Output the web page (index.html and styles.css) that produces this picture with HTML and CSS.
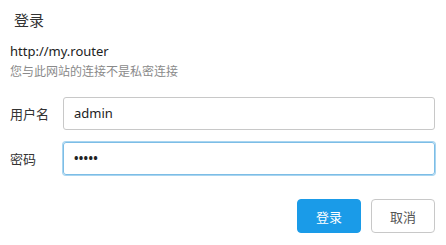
FILE: index.html
```html
<!DOCTYPE html>
<html lang="zh-CN">
<head>
<meta charset="utf-8">
<link rel="stylesheet" href="styles.css">
</head>
<body>
<div class="dialog">
  <div class="title">登录</div>
  <div class="origin">http://my.router</div>
  <div class="warning">您与此网站的连接不是私密连接</div>
  <div class="form">
    <div class="row">
      <label class="label">用户名</label>
      <div class="input">admin</div>
    </div>
    <div class="row">
      <label class="label">密码</label>
      <div class="input focus"><span class="dots">•••••</span></div>
    </div>
  </div>
  <div class="buttons">
    <button class="btn primary">登录</button>
    <button class="btn">取消</button>
  </div>
</div>
</body>
</html>
```
FILE: styles.css
```css
html, body {
  margin: 0;
  padding: 0;
  background: #ffffff;
}
body {
  font-family: "Noto Sans", "Noto Sans CJK SC", sans-serif;
  color: #333;
}
.dialog {
  width: 446px;
  height: 245px;
  box-sizing: border-box;
  padding: 9px 11px 0 10px;
}
.title {
  font-size: 15px;
  line-height: 22px;
  padding-left: 4px;
  color: #333;
}
.origin {
  margin-top: 11px;
  font-size: 13px;
  line-height: 18px;
  color: #222;
}
.warning {
  margin-top: 4px;
  font-size: 12px;
  line-height: 16px;
  color: #8a8a8a;
}
.form {
  margin-top: 17px;
  display: flex;
  flex-direction: column;
  gap: 12px;
}
.row {
  display: flex;
  align-items: center;
}
.label {
  width: 53px;
  font-size: 13px;
  color: #333;
}
.input {
  flex: 1;
  height: 33px;
  box-sizing: border-box;
  border: 1px solid #c8c8c8;
  border-radius: 3px;
  padding: 0 10px;
  font-size: 13px;
  line-height: 31px;
  color: #222;
}
.input.focus {
  border-color: #7cbde6;
  box-shadow: 0 0 0 1px #a9d5f0;
}
.dots {
  font-size: 12px;
  font-weight: bold;
  letter-spacing: 0.3px;
  color: #222;
}
.buttons {
  margin-top: 24px;
  display: flex;
  justify-content: flex-end;
  gap: 10px;
}
.btn {
  width: 64px;
  height: 34px;
  border: 1px solid #c8c8c8;
  border-radius: 4px;
  background: #fff;
  color: #555;
  font-family: "Noto Sans", "Noto Sans CJK SC", sans-serif;
  font-size: 13px;
  padding: 0;
}
.btn.primary {
  background: #1a9be8;
  border-color: #1a9be8;
  color: #fff;
}
```
